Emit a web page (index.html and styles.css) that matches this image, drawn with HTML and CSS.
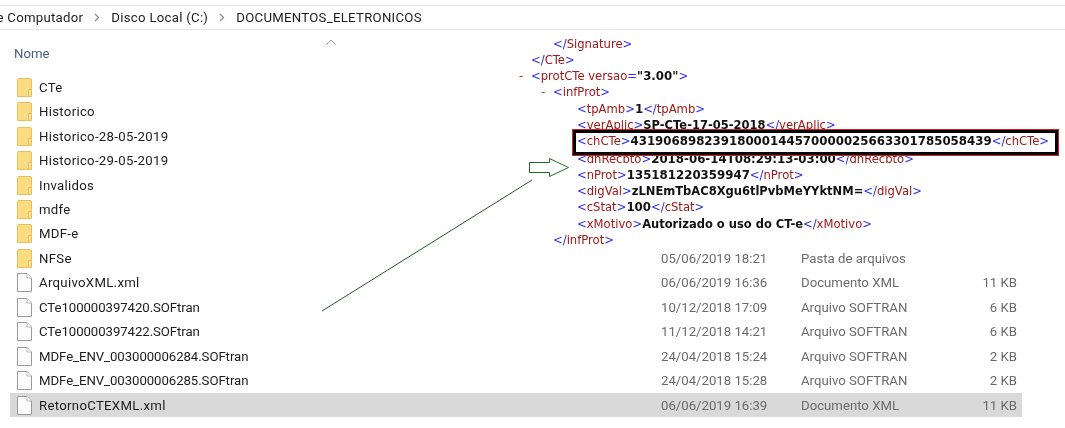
FILE: index.html
```html
<!DOCTYPE html>
<html lang="pt-BR">
<head>
<meta charset="utf-8">
<title>DOCUMENTOS_ELETRONICOS</title>
<link rel="stylesheet" href="styles.css">
</head>
<body>
<svg width="0" height="0" class="defs">
  <symbol id="folder" viewBox="0 0 15 19">
    <path d="M0.5 1.5 Q0.5 0.5 1.5 0.5 H13 Q14.5 0.5 14.5 2 V18.5 H0.5 Z" fill="#fbdc82" stroke="#e9bf5c"/>
    <path d="M11.5 18.5 V11.5 H14.5" fill="#fde9ad" stroke="#e9bf5c"/>
  </symbol>
  <symbol id="doc" viewBox="0 0 15 19">
    <path d="M0.5 0.5 H10 L14.5 5 V18.5 H0.5 Z" fill="#fdfdfd" stroke="#9a9a9a"/>
    <path d="M10 0.5 V5 H14.5" fill="#fff" stroke="#b5b5b5"/>
  </symbol>
</svg>
<div class="explorer">
  <nav class="crumbs">
    <span class="crumb first">Este Computador</span>
    <svg class="sep" width="6" height="9" viewBox="0 0 6 9"><path d="M1 1 L4.5 4.5 L1 8" fill="none" stroke="#8a8a8a" stroke-width="1.3"/></svg>
    <span class="crumb">Disco Local (C:)</span>
    <svg class="sep" width="6" height="9" viewBox="0 0 6 9"><path d="M1 1 L4.5 4.5 L1 8" fill="none" stroke="#8a8a8a" stroke-width="1.3"/></svg>
    <span class="crumb">DOCUMENTOS_ELETRONICOS</span>
  </nav>
  <header class="head">
    <span class="head-name">Nome</span>
    <svg class="sort" width="10" height="6" viewBox="0 0 10 6"><path d="M0.5 5.5 L5 1 L9.5 5.5" fill="none" stroke="#9a9a9a"/></svg>
  </header>
  <ul class="list">
    <li class="row"><svg class="ico"><use href="#folder"/></svg><span class="name">CTe</span></li>
    <li class="row"><svg class="ico"><use href="#folder"/></svg><span class="name">Historico</span></li>
    <li class="row"><svg class="ico"><use href="#folder"/></svg><span class="name">Historico-28-05-2019</span></li>
    <li class="row"><svg class="ico"><use href="#folder"/></svg><span class="name">Historico-29-05-2019</span></li>
    <li class="row"><svg class="ico"><use href="#folder"/></svg><span class="name">Invalidos</span></li>
    <li class="row"><svg class="ico"><use href="#folder"/></svg><span class="name">mdfe</span></li>
    <li class="row"><svg class="ico"><use href="#folder"/></svg><span class="name">MDF-e</span></li>
    <li class="row"><svg class="ico"><use href="#folder"/></svg><span class="name">NFSe</span><span class="date">05/06/2019 18:21</span><span class="type">Pasta de arquivos</span></li>
    <li class="row"><svg class="ico"><use href="#doc"/></svg><span class="name">ArquivoXML.xml</span><span class="date">06/06/2019 16:36</span><span class="type">Documento XML</span><span class="size">11 KB</span></li>
    <li class="row"><svg class="ico"><use href="#doc"/></svg><span class="name num">CTe100000397420.SOFtran</span><span class="date">10/12/2018 17:09</span><span class="type">Arquivo SOFTRAN</span><span class="size">6 KB</span></li>
    <li class="row"><svg class="ico"><use href="#doc"/></svg><span class="name num">CTe100000397422.SOFtran</span><span class="date">11/12/2018 14:21</span><span class="type">Arquivo SOFTRAN</span><span class="size">6 KB</span></li>
    <li class="row"><svg class="ico"><use href="#doc"/></svg><span class="name num">MDFe_ENV_003000006284.SOFtran</span><span class="date">24/04/2018 15:24</span><span class="type">Arquivo SOFTRAN</span><span class="size">2 KB</span></li>
    <li class="row"><svg class="ico"><use href="#doc"/></svg><span class="name num">MDFe_ENV_003000006285.SOFtran</span><span class="date">24/04/2018 15:28</span><span class="type">Arquivo SOFTRAN</span><span class="size">2 KB</span></li>
    <li class="row selected"><svg class="ico"><use href="#doc"/></svg><span class="name">RetornoCTEXML.xml</span><span class="date">06/06/2019 16:39</span><span class="type">Documento XML</span><span class="size">11 KB</span></li>
  </ul>
</div>

<section class="xml">
  <div class="ln clip-top l1"><b class="p">&lt;/</b><i>Signature</i><b class="p">&gt;</b></div>
  <div class="ln l0"><b class="p">&lt;/</b><i>CTe</i><b class="p">&gt;</b></div>
  <div class="ln l0"><span class="minus m0">-</span><b class="p">&lt;</b><i>protCTe versao</i><b class="p">=</b><em>"3.00"</em><b class="p">&gt;</b></div>
  <div class="ln l1"><span class="minus m1">-</span><b class="p">&lt;</b><i>infProt</i><b class="p">&gt;</b></div>
  <div class="ln l2"><b class="p">&lt;</b><i>tpAmb</i><b class="p">&gt;</b><em>1</em><b class="p">&lt;/</b><i>tpAmb</i><b class="p">&gt;</b></div>
  <div class="ln l2"><b class="p">&lt;</b><i>verAplic</i><b class="p">&gt;</b><em class="alpha">SP-CTe-17-05-2018</em><b class="p">&lt;/</b><i>verAplic</i><b class="p">&gt;</b></div>
  <div class="ln l2 key"><b class="p">&lt;</b><i>chCTe</i><b class="p">&gt;</b><em>43190689823918000144570000025663301785058439</em><b class="p">&lt;/</b><i>chCTe</i><b class="p">&gt;</b></div>
  <div class="ln l2"><b class="p">&lt;</b><i>dhRecbto</i><b class="p">&gt;</b><em>2018-06-14T08:29:13-03:00</em><b class="p">&lt;/</b><i>dhRecbto</i><b class="p">&gt;</b></div>
  <div class="ln l2"><b class="p">&lt;</b><i>nProt</i><b class="p">&gt;</b><em>135181220359947</em><b class="p">&lt;/</b><i>nProt</i><b class="p">&gt;</b></div>
  <div class="ln l2"><b class="p">&lt;</b><i>digVal</i><b class="p">&gt;</b><em class="alpha">zLNEmTbAC8Xgu6tlPvbMeYYktNM=</em><b class="p">&lt;/</b><i>digVal</i><b class="p">&gt;</b></div>
  <div class="ln l2"><b class="p">&lt;</b><i>cStat</i><b class="p">&gt;</b><em>100</em><b class="p">&lt;/</b><i>cStat</i><b class="p">&gt;</b></div>
  <div class="ln l2"><b class="p">&lt;</b><i>xMotivo</i><b class="p">&gt;</b><em class="alpha">Autorizado o uso do CT-e</em><b class="p">&lt;/</b><i>xMotivo</i><b class="p">&gt;</b></div>
  <div class="ln l1"><b class="p">&lt;/</b><i>infProt</i><b class="p">&gt;</b></div>
  <div class="ln l1"><span class="minus m1">-</span><b class="p">&lt;</b><i>CTe</i><b class="p">&gt;</b></div>
  <div class="keybox"></div>
</section>

<svg class="marks" width="1065" height="428" viewBox="0 0 1065 428">
  <path d="M322 311 L532 180" fill="none" stroke="#1f5c1f" stroke-width="1"/>
  <path d="M529.5 162.5 H549.5 V158.5 L568.5 167.5 L549.5 176.5 V172.5 H529.5 Z" fill="#fff" stroke="#1f6b1f" stroke-width="1"/>
</svg>
</body>
</html>
```
FILE: styles.css
```css
* { box-sizing: border-box; }
html, body { margin: 0; padding: 0; }
body {
  width: 1065px;
  height: 428px;
  overflow: hidden;
  position: relative;
  background: #fff;
  font-family: Roboto, "Open Sans", sans-serif;
  font-size: 13.2px;
  color: #1c1c1c;
}
.defs { position: absolute; }
.explorer { padding-top: 5px; filter: blur(0.35px); }
.crumbs {
  height: 25px;
  display: flex;
  align-items: center;
  border-top: 1.5px solid #e6e6e6;
  border-bottom: 1.5px solid #e6e6e6;
  white-space: nowrap;
  letter-spacing: 0.28px;
}
.crumb.first { margin-left: -23px; }
.sep { margin: 0 11px 0 11px; }
.head {
  height: 45px;
  padding: 1px 0 0 14px;
  display: flex;
  align-items: center;
  color: #4a5f7c;
}
.head-name { width: 312px; }
.sort { margin-bottom: 22px; }
.list { list-style: none; margin: 0; padding: 0; }
.row {
  height: 24.46px;
  margin-left: 10px;
  width: 1012px;
  padding-left: 7px;
  display: grid;
  grid-template-columns: 15px 629px 140px 140px 76px;
  column-gap: 0;
  align-items: center;
}
.ico { width: 15px; height: 19px; }
.name { padding-left: 7px; white-space: nowrap; letter-spacing: 0.3px; }
.name.num { letter-spacing: -0.06px; }
.date, .type, .size { color: #6b6b6b; white-space: nowrap; }
.date { grid-column: 3; }
.type { grid-column: 4; }
.size { grid-column: 5; text-align: right; }
.selected { background: #d9d9d9; }

.xml {
  position: absolute;
  left: 500px;
  top: 39px;
  width: 565px;
  height: 212px;
  background: #fff;
  overflow: hidden;
  font-family: "DejaVu Sans", sans-serif;
  font-size: 11.6px;
  filter: blur(0.35px);
}
.ln { height: 16.25px; line-height: 16.25px; white-space: nowrap; position: relative; }
.clip-top { margin-top: -3.5px; }
.l0 { padding-left: 31px; }
.l1 { padding-left: 53px; }
.l2 { padding-left: 77px; }
.ln b { font-weight: normal; color: #2a2af0; }
.ln i { font-style: normal; color: #a01818; }
.ln em { font-style: normal; font-weight: bold; color: #111; font-size: 11.8px; }
.ln em.alpha { font-size: 11.5px; }
.minus { position: absolute; color: #c02020; }
.m0 { left: 19px; }
.m1 { left: 41px; }
.key { height: 17.5px; line-height: 17.5px; }
.keybox {
  position: absolute;
  left: 73px;
  top: 91px;
  width: 485px;
  height: 25px;
  border: 3px solid #000;
  outline: 1px solid #d02020;
}
.marks { position: absolute; left: 0; top: 0; pointer-events: none; }
```
